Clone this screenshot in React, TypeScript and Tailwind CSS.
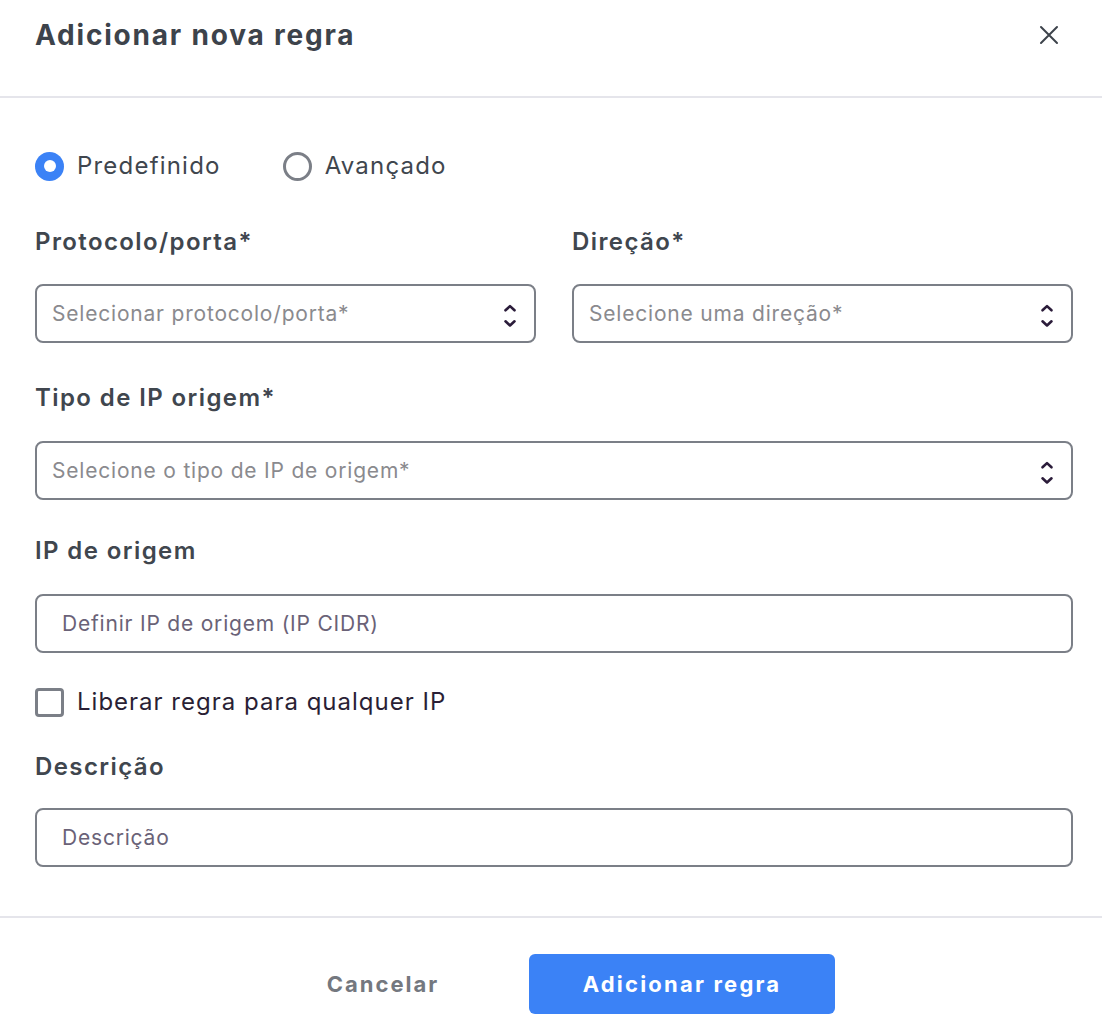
import type { JSX } from "react";

function Chevrons(): JSX.Element {
  return (
    <svg width="14" height="30" viewBox="0 0 14 30" fill="none" className="shrink-0 mt-[3px]">
      <path d="M2.5 10.3 7 6.1l4.5 4.2" stroke="#2b1c3a" strokeWidth="2.6" strokeLinecap="round" strokeLinejoin="round" />
      <path d="M2.5 21.3 7 25.5l4.5-4.2" stroke="#2b1c3a" strokeWidth="2.6" strokeLinecap="round" strokeLinejoin="round" />
    </svg>
  );
}

function SelectBox({ placeholder }: { placeholder: string }) {
  return (
    <div className="h-[59px] w-full rounded-[8px] border-2 border-[#7b7f87] flex items-center justify-between pl-[15px] pr-[17px]">
      <span className="text-[21px] text-[#8a8a8e] tracking-[0.8px]">{placeholder}</span>
      <Chevrons />
    </div>
  );
}

function TextBox({ placeholder }: { placeholder: string }) {
  return (
    <div className="h-[59px] w-full rounded-[8px] border-2 border-[#7b7f87] flex items-center pl-[25px]">
      <span className="text-[21px] text-[#6a6277] tracking-[0.8px]">{placeholder}</span>
    </div>
  );
}

function Label({ children }: { children: string }) {
  return (
    <div className="h-[30px] flex items-center text-[24px] font-semibold text-[#40464e] tracking-[1.4px]">
      {children}
    </div>
  );
}

export default function App() {
  return (
    <div
      className="w-[1102px] h-[1032px] bg-white overflow-hidden"
      style={{ fontFamily: "Inter, 'Noto Sans', sans-serif" }}
    >
      {/* header */}
      <div className="h-[98px] border-b-2 border-[#e5e5eb] flex items-start justify-between pl-[35px] pr-[43px] pt-[19px]">
        <h1 className="text-[28px] leading-[32px] font-bold text-[#3d434b] tracking-[1.8px]">
          Adicionar nova regra
        </h1>
        <svg width="20" height="20" viewBox="0 0 20 20" className="mt-[6px]">
          <path d="M2 2l16 16M18 2 2 18" stroke="#3d434b" strokeWidth="2" strokeLinecap="round" />
        </svg>
      </div>

      {/* body */}
      <div className="pl-[35px] pr-[29px] pt-[53px] pb-[49px] border-b-2 border-[#e5e5eb]">
        <div className="h-[30px] flex items-center">
          <div className="flex items-center gap-[13px]">
            <span className="w-[29px] h-[29px] rounded-full bg-[#3b82f6] flex items-center justify-center">
              <span className="w-[12px] h-[12px] rounded-full bg-white" />
            </span>
            <span className="text-[24px] text-[#40464e] tracking-[1.2px]">Predefinido</span>
          </div>
          <div className="flex items-center gap-[13px] ml-[62px]">
            <span className="w-[29px] h-[29px] rounded-full border-[3px] border-[#7b7f87]" />
            <span className="text-[24px] text-[#40464e] tracking-[1.2px]">Avançado</span>
          </div>
        </div>

        <div className="grid grid-cols-2 gap-x-[36px] mt-[46px]">
          <div>
            <Label>Protocolo/porta*</Label>
            <div className="mt-[27px]">
              <SelectBox placeholder="Selecionar protocolo/porta*" />
            </div>
          </div>
          <div>
            <Label>Direção*</Label>
            <div className="mt-[27px]">
              <SelectBox placeholder="Selecione uma direção*" />
            </div>
          </div>
        </div>

        <div className="mt-[40px]">
          <Label>Tipo de IP origem*</Label>
          <div className="mt-[28px]">
            <SelectBox placeholder="Selecione o tipo de IP de origem*" />
          </div>
        </div>

        <div className="mt-[36px]">
          <Label>IP de origem</Label>
          <div className="mt-[28px]">
            <TextBox placeholder="Definir IP de origem (IP CIDR)" />
          </div>
        </div>

        <div className="mt-[34px] h-[30px] flex items-center gap-[13px]">
          <span className="w-[29px] h-[29px] rounded-[4px] border-[3px] border-[#7b7f87]" />
          <span className="text-[24px] text-[#2a1f35] tracking-[1px]">Liberar regra para qualquer IP</span>
        </div>

        <div className="mt-[35px]">
          <Label>Descrição</Label>
          <div className="mt-[26px]">
            <TextBox placeholder="Descrição" />
          </div>
        </div>
      </div>

      {/* footer */}
      <div className="pt-[36px] flex items-center justify-center gap-[30px]">
        <button className="w-[232px] text-[22px] font-bold text-[#74787f] tracking-[2px]">Cancelar</button>
        <button className="w-[306px] h-[60px] rounded-[6px] bg-[#3b82f6] text-white text-[22px] font-bold tracking-[2.2px]">
          Adicionar regra
        </button>
      </div>
    </div>
  );
}
